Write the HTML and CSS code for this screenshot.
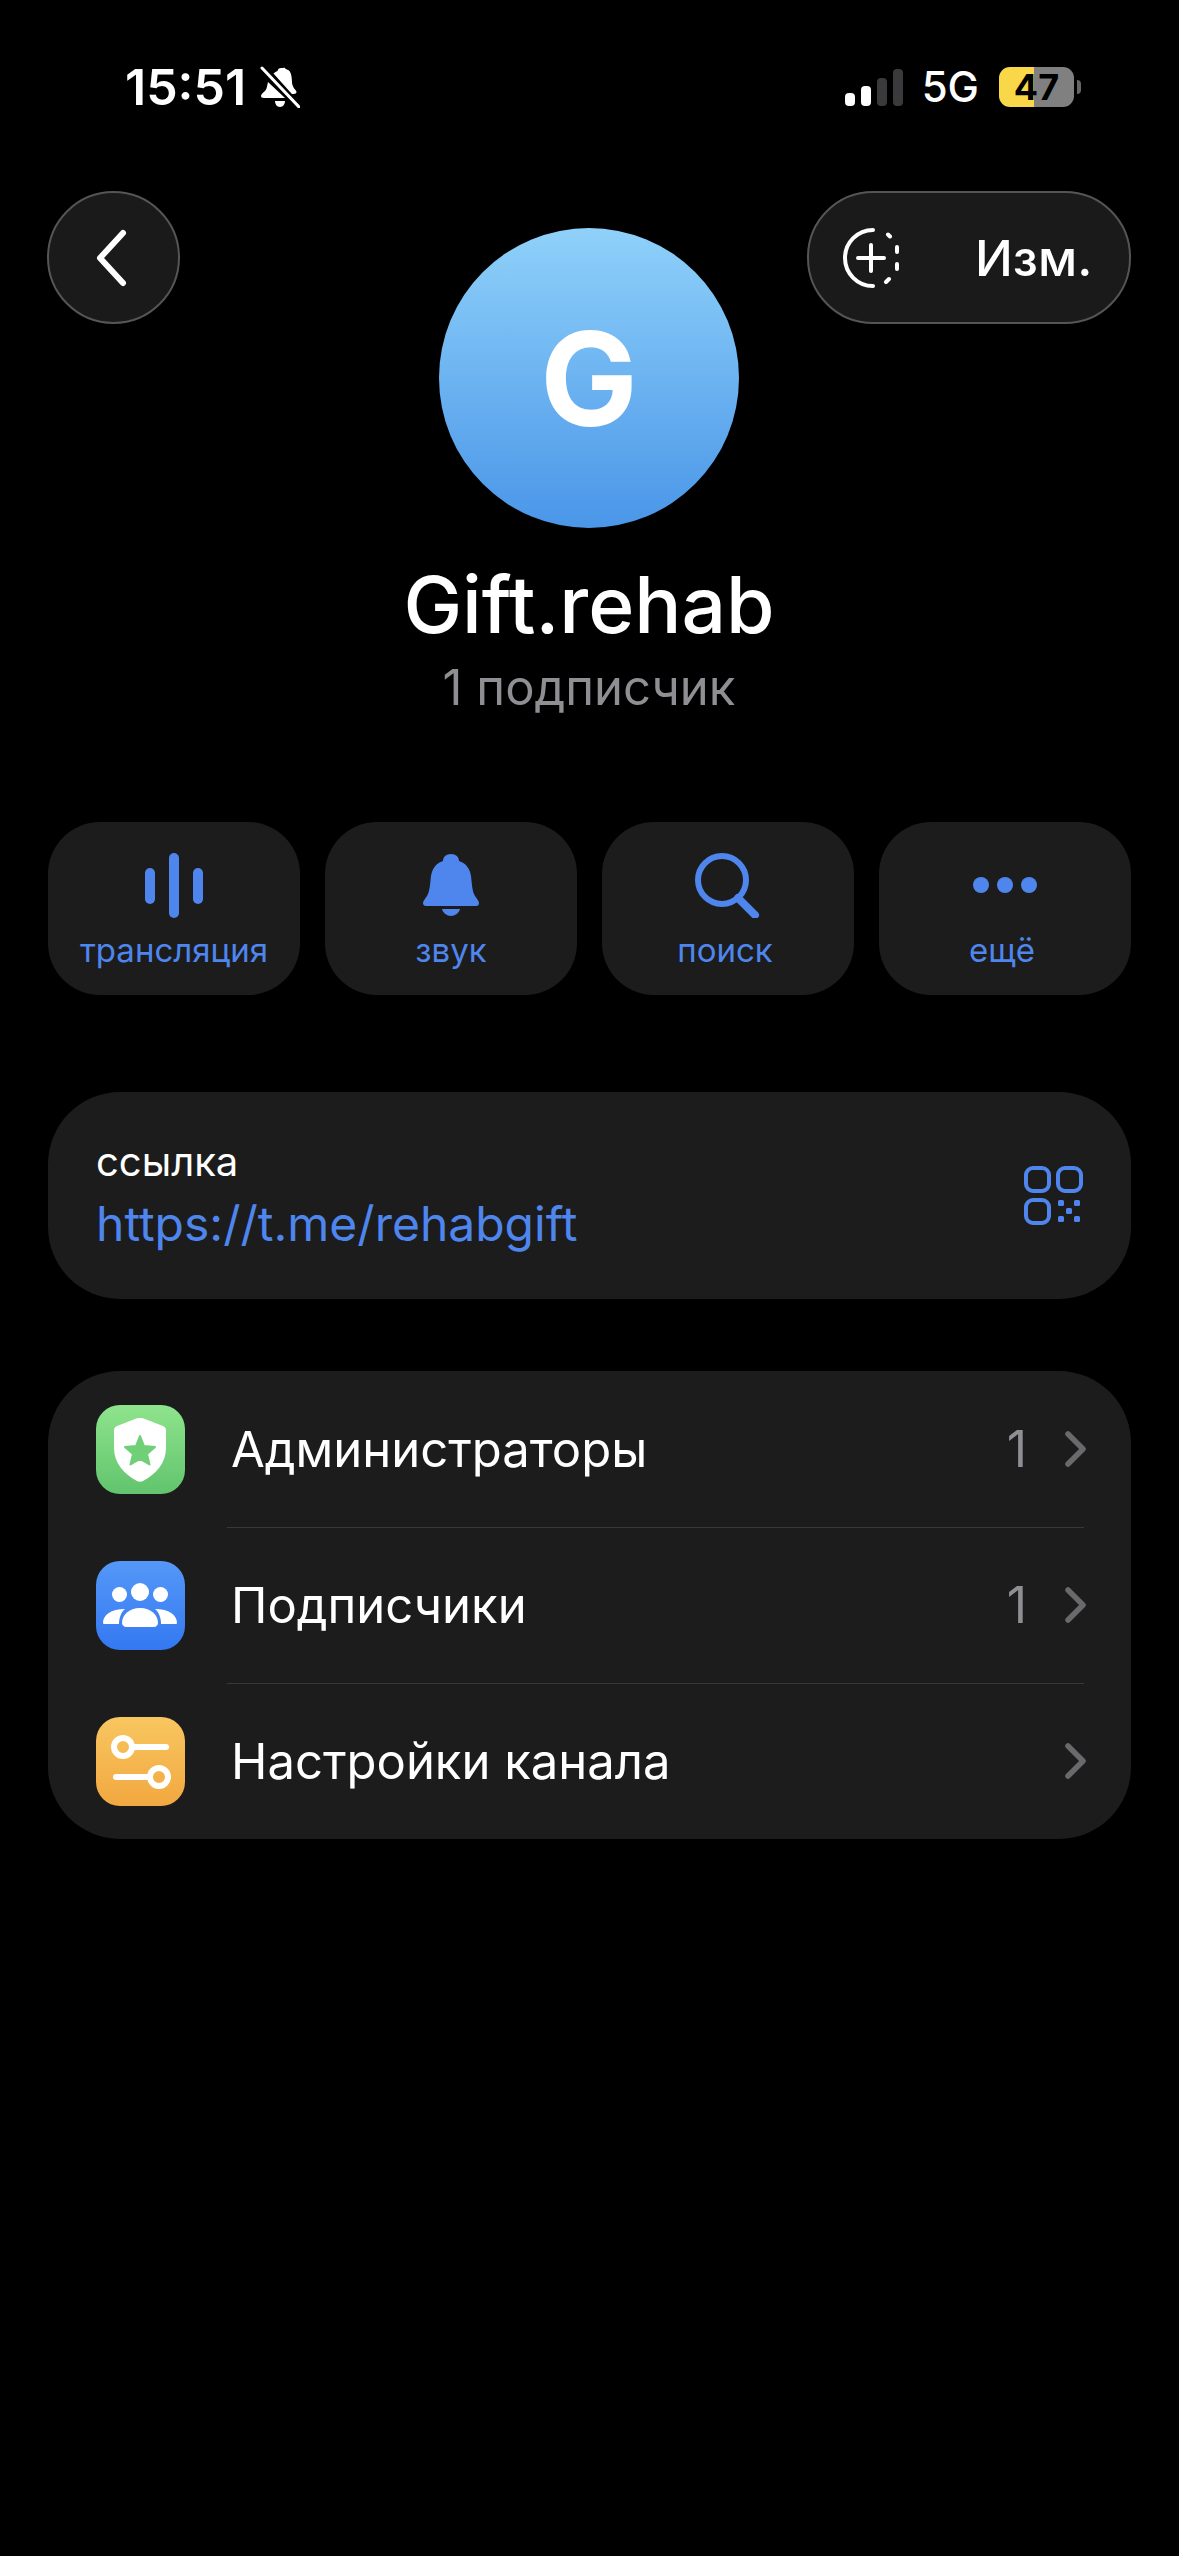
FILE: index.html
```html
<!DOCTYPE html>
<html lang="ru">
<head>
  <meta charset="UTF-8" />
  <meta name="viewport" content="width=device-width, initial-scale=1.0" />
  <title>Gift.rehab</title>
  <link rel="stylesheet" href="styles.css">
</head>
<body>
  <div class="status">
    <div class="status-left">
      <span class="time">15:51</span>
      <svg class="silent" viewBox="0 0 40 42">
        <path fill="#fff" d="M21 2c-2 0-3 1-3.500 3-3 1-5 3-6 6l16 17h6c2 0 3-1 3-2 0-2-3-3-4-7-1-3 0-10-3-14-1-1-3-2-4-2 0-2-3-1-4-1zM8 16c-1 4-1 7-3 9-2 2-4 3-4 5 0 1 1 2 3 2h21zM15 35h10c0 3-2 6-5 6s-5-3-5-6z"/>
        <path stroke="#000" stroke-width="7" d="M2 0l36 40"/>
        <path stroke="#fff" stroke-width="3" stroke-linecap="round" d="M2 2l37 39"/>
      </svg>
    </div>
    <div class="status-right">
      <div class="signal">
        <i class="bar bar-1"></i>
        <i class="bar bar-2"></i>
        <i class="bar bar-3"></i>
        <i class="bar bar-4"></i>
      </div>
      <span class="network">5G</span>
      <div class="battery"><span>47</span></div>
      <i class="battery-cap"></i>
    </div>
  </div>

  <div class="header">
    <button class="nav-btn back-btn">
      <svg width="34" height="58" viewBox="0 0 34 58"><path d="M29 4L6 29l23 25" fill="none" stroke="#fff" stroke-width="6" stroke-linecap="round" stroke-linejoin="round"/></svg>
    </button>
    <div class="avatar">G</div>
    <button class="nav-btn edit-btn">
      <svg width="60" height="60" viewBox="0 0 60 60" fill="none" stroke="#fff" stroke-width="4" stroke-linecap="round">
        <path d="M32 2A28 28 0 0 0 32 58"/>
        <path d="M47 6.500l2 2M56 19v5M56 36v5M48 51l-3 3"/>
        <path d="M30 17v26M17 30h26"/>
      </svg>
      <span>Изм.</span>
    </button>
  </div>

  <div class="title">
    <h1>Gift.rehab</h1>
    <p>1 подписчик</p>
  </div>

  <div class="actions">
    <div class="action">
      <svg width="60" height="66" viewBox="0 0 60 66" fill="#4f86ee">
        <rect x="1" y="16" width="10" height="36" rx="5"/>
        <rect x="25" y="1" width="10" height="65" rx="5"/>
        <rect x="49" y="16" width="10" height="36" rx="5"/>
      </svg>
      <span>трансляция</span>
    </div>
    <div class="action">
      <svg width="60" height="66" viewBox="0 0 60 66" fill="#4f86ee">
        <path d="M30 2c-5 0-8 3-8 7-7 2-11 8-12 15-1 8-1 15-4 20-2 3-4 5-4 7s1 3 3 3h50c2 0 3-1 3-3s-2-4-4-7c-3-5-3-12-4-20-1-7-5-13-12-15 0-4-3-7-8-7zM21 57h18c-1 4-5 7-9 7s-8-3-9-7z"/>
      </svg>
      <span>звук</span>
    </div>
    <div class="action action-off">
      <svg width="66" height="66" viewBox="0 0 66 66" fill="none" stroke="#4f86ee" stroke-width="6" stroke-linecap="round">
        <circle cx="27" cy="28" r="24"/>
        <path d="M43 46l17 17" stroke-width="8"/>
      </svg>
      <span>поиск</span>
    </div>
    <div class="action action-off">
      <svg width="66" height="66" viewBox="0 0 66 66" fill="#4f86ee">
        <circle cx="9" cy="33" r="8"/>
        <circle cx="33" cy="33" r="8"/>
        <circle cx="57" cy="33" r="8"/>
      </svg>
      <span>ещё</span>
    </div>
  </div>

  <div class="card link-card">
    <div class="link-text">
      <div class="link-label">ссылка</div>
      <div class="link-url">https://t.me/rehabgift</div>
    </div>
    <svg width="60" height="60" viewBox="0 0 60 60" fill="none" stroke="#4f86ee" stroke-width="4">
      <rect x="2" y="2" width="23" height="23" rx="7"/>
      <rect x="34" y="2" width="23" height="23" rx="7"/>
      <rect x="2" y="34" width="23" height="23" rx="7"/>
      <g fill="#4f86ee" stroke="none">
        <rect x="34" y="34" width="6" height="6" rx="1.500"/>
        <rect x="50" y="34" width="6" height="6" rx="1.500"/>
        <rect x="42" y="42" width="6" height="6" rx="1.500"/>
        <rect x="34" y="50" width="6" height="6" rx="1.500"/>
        <rect x="50" y="50" width="6" height="6" rx="1.500"/>
      </g>
    </svg>
  </div>

  <div class="card menu">
    <div class="row">
      <div class="row-icon icon-green">
        <svg width="88" height="88" viewBox="0 0 88 88">
          <path fill="#fff" d="M44 13c-2 0-3 0-5 1L21 21c-2 1-3 2-3 5v17c0 15 10 26 23 33 2 1 4 1 6 0 13-7 23-18 23-33V26c0-3-1-4-3-5L49 14c-2-1-3-1-5-1z"/>
          <path fill="#6fd078" stroke="#6fd078" stroke-width="2" stroke-linejoin="round" d="M44 31l4 10 11 1-8 7 2.500 10.500L44 54l-9.500 5.500L37 49l-8-7 11-1z"/>
        </svg>
      </div>
      <span class="row-title">Администраторы</span>
      <span class="row-count">1</span>
      <svg class="chevron" width="22" height="36" viewBox="0 0 22 36"><path d="M3 3l15 15L3 33" fill="none" stroke="#6a6a6e" stroke-width="5.500" stroke-linecap="round" stroke-linejoin="round"/></svg>
    </div>
    <div class="row">
      <div class="row-icon icon-blue">
        <svg width="88" height="88" viewBox="0 0 88 88" fill="#fff">
          <circle cx="23.500" cy="33.500" r="7.500"/>
          <circle cx="44" cy="31" r="9"/>
          <circle cx="64.500" cy="33.500" r="7.500"/>
          <path d="M7 62c0-8 8-14 22-14-4 3-6 9-6 15H10c-2 0-3 0-3-1zM81 62c0-8-8-14-22-14 4 3 6 9 6 15h13c2 0 3 0 3-1z"/>
          <path d="M44 47c-11 0-18 7-18 15 0 2 2 4 4 4h28c2 0 4-2 4-4 0-8-7-15-18-15z"/>
        </svg>
      </div>
      <span class="row-title">Подписчики</span>
      <span class="row-count">1</span>
      <svg class="chevron" width="22" height="36" viewBox="0 0 22 36"><path d="M3 3l15 15L3 33" fill="none" stroke="#6a6a6e" stroke-width="5.500" stroke-linecap="round" stroke-linejoin="round"/></svg>
    </div>
    <div class="row">
      <div class="row-icon icon-orange">
        <svg width="88" height="88" viewBox="0 0 88 88" fill="none" stroke="#fff" stroke-width="6" stroke-linecap="round">
          <circle cx="27" cy="30" r="9"/>
          <path d="M36 30h34"/>
          <circle cx="63" cy="60" r="9"/>
          <path d="M20 60h34"/>
        </svg>
      </div>
      <span class="row-title">Настройки канала</span>
      <svg class="chevron" width="22" height="36" viewBox="0 0 22 36"><path d="M3 3l15 15L3 33" fill="none" stroke="#6a6a6e" stroke-width="5.500" stroke-linecap="round" stroke-linejoin="round"/></svg>
    </div>
  </div>
</body>
</html>
```

FILE: styles.css
```css
body {
  font-family: Inter, "Liberation Sans", sans-serif;
  margin: 0;
  height: 2556px;
  overflow: hidden;
  padding: 0 48px 0 47px;
  box-sizing: border-box;
  background: #000;
  color: #fff;
}

.status {
  display: flex;
  justify-content: space-between;
  align-items: center;
  height: 40px;
  padding: 67px 0 0 78px;
}

.status-left {
  display: flex;
  align-items: center;
  gap: 14px;
}

.time {
  font-size: 50px;
  font-weight: 600;
  line-height: 40px;
}

.silent {
  width: 40px;
  height: 42px;
}

.status-right {
  display: flex;
  align-items: center;
  padding-right: 50px;
}

.signal {
  display: flex;
  align-items: flex-end;
  gap: 6px;
  height: 38px;
  margin-right: 19px;
}

.bar {
  width: 10px;
  border-radius: 4px;
  background: #fff;
}

.bar-1 { height: 13px; }
.bar-2 { height: 20px; }
.bar-3 { height: 28px; background: #3a3a3c; }
.bar-4 { height: 37px; background: #3a3a3c; }

.network {
  font-size: 42px;
  font-weight: 500;
  line-height: 40px;
  margin-right: 20px;
}

.battery {
  width: 75px;
  height: 40px;
  border-radius: 11px;
  background: linear-gradient(to right, #f8d748 47%, #808080 47%);
  color: #000;
  font-size: 36px;
  font-weight: 700;
  line-height: 40px;
  text-align: center;
}

.battery-cap {
  width: 4px;
  height: 14px;
  margin-left: 3px;
  border-radius: 0 7px 7px 0;
  background: #666;
}

.header {
  display: grid;
  grid-template-columns: 1fr 300px 1fr;
  align-items: start;
  margin-top: 84px;
}

.nav-btn {
  height: 133px;
  border: 2px solid #555;
  background: #1a1a1a;
  color: #fff;
  font-family: inherit;
  padding: 0;
  box-sizing: border-box;
}

.back-btn {
  width: 133px;
  border-radius: 50%;
  display: flex;
  align-items: center;
  justify-content: center;
}

.back-btn svg {
  margin-right: 6px;
}

.edit-btn {
  width: 324px;
  justify-self: end;
  border-radius: 66px;
  display: flex;
  align-items: center;
  gap: 74px;
  padding-left: 32px;
  font-size: 50px;
  font-weight: 500;
}

.avatar {
  width: 300px;
  height: 300px;
  margin-top: 37px;
  border-radius: 50%;
  background: linear-gradient(to bottom, #8fd1fa, #4a96e8);
  display: flex;
  align-items: center;
  justify-content: center;
  font-size: 130px;
  font-weight: 700;
}

.title {
  text-align: center;
  margin-top: 29px;
}

.title h1 {
  margin: 0;
  font-size: 78.5px;
  font-weight: 500;
  line-height: 96px;
}

.title p {
  margin: 6px 0 0;
  font-size: 49px;
  line-height: 58px;
  color: #8e8e93;
}

.actions {
  display: grid;
  grid-template-columns: repeat(4, 1fr);
  gap: 25px;
  margin: 105px 0 0 1px;
}

.action {
  height: 173px;
  padding-top: 30px;
  box-sizing: border-box;
  border-radius: 52px;
  background: #1c1c1c;
  display: flex;
  flex-direction: column;
  align-items: center;
  color: #4f86ee;
  font-size: 33px;
}

.action span {
  margin-top: 13px;
  line-height: 38px;
}

.action-off span {
  margin-right: 6px;
}

.card {
  background: #1c1c1c;
  border-radius: 72px;
  margin-left: 1px;
}

.link-card {
  display: flex;
  align-items: center;
  justify-content: space-between;
  height: 207px;
  margin-top: 97px;
  padding: 0 47px 0 48px;
}

.link-label {
  font-size: 40px;
  line-height: 48px;
}

.link-url {
  margin-top: 8px;
  font-size: 48px;
  line-height: 60px;
  color: #4f86ee;
}

.menu {
  margin-top: 72px;
  height: 468px;
  padding: 0 47px 0 48px;
}

.row {
  display: flex;
  align-items: center;
  height: 156px;
  position: relative;
}

.row + .row::before {
  content: "";
  position: absolute;
  top: 0;
  left: 131px;
  right: 0;
  height: 1px;
  background: #38383a;
}

.row-icon {
  width: 89px;
  height: 89px;
  border-radius: 24px;
  flex-shrink: 0;
}

.row-icon svg {
  display: block;
}

.icon-green { background: linear-gradient(to bottom, #8ee48c, #62c46e); }
.icon-blue { background: linear-gradient(to bottom, #5598f8, #3478f2); }
.icon-orange { background: linear-gradient(to bottom, #f8c660, #f2a840); }

.row-title {
  flex: 1;
  margin-left: 46px;
  font-size: 49px;
}

.row-count {
  font-size: 50px;
  color: #8e8e93;
  margin-right: 38px;
}

.chevron {
  margin-right: -3px;
}
```
